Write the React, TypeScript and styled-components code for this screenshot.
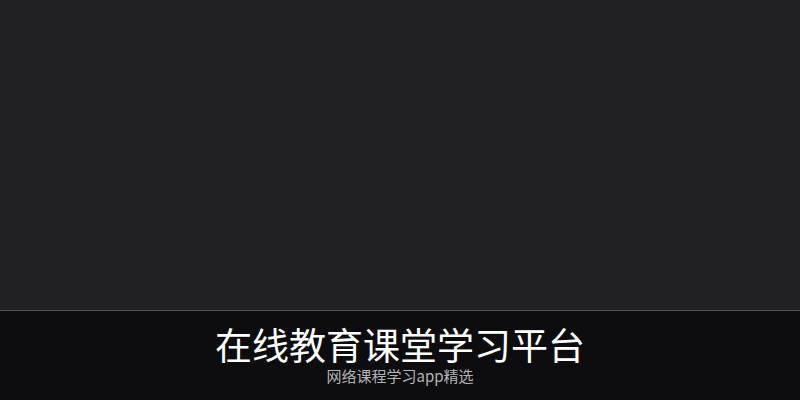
import React from 'react';
import styled, { createGlobalStyle } from 'styled-components';

const GlobalStyle = createGlobalStyle`
  html, body {
    margin: 0;
    padding: 0;
    background: #0d0d0f;
  }
  #root {
    height: 400px;
  }
`;

const Page = styled.div`
  display: flex;
  flex-direction: column;
  width: 800px;
  height: 400px;
  font-family: "Noto Sans CJK SC", "Noto Sans", sans-serif;
`;

const Stage = styled.div`
  flex: 1;
  background: #202025;
  border-bottom: 1px solid #56565a;
`;

const Caption = styled.div`
  height: 89px;
  background: #0d0d0f;
  display: flex;
  flex-direction: column;
  align-items: center;
  padding-top: 13px;
  gap: 3px;
  box-sizing: border-box;
`;

const Title = styled.h1`
  margin: 0;
  font-size: 37px;
  font-weight: 400;
  line-height: 40px;
  color: #ffffff;
`;

const Subtitle = styled.p`
  margin: 0;
  font-size: 15px;
  line-height: 18px;
  color: #b4b4b8;
`;

export default function App() {
  return (
    <>
      <GlobalStyle />
      <Page>
        <Stage />
        <Caption>
          <Title>在线教育课堂学习平台</Title>
          <Subtitle>网络课程学习app精选</Subtitle>
        </Caption>
      </Page>
    </>
  );
}
